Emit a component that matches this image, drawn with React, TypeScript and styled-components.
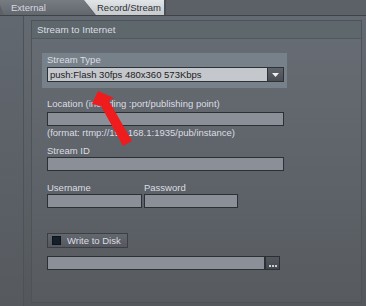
import React from "react";
import styled, { createGlobalStyle } from "styled-components";

const Global = createGlobalStyle`
  html, body { margin: 0; padding: 0; }
  body { background: #5d6268; font-family: "Liberation Sans", Arial, sans-serif; font-size: 9.5px; }
`;

const Root = styled.div`
  position: relative;
  width: 366px;
  height: 306px;
  overflow: hidden;
  display: flex;
  flex-direction: column;
  background: linear-gradient(#656b72, #54585d);
`;

const TabBar = styled.div`
  height: 15px;
  flex: none;
  display: flex;
  background: #5c6168;
  border-bottom: 1px solid #3f4348;
`;

const Tab = styled.div<{ $active?: boolean }>`
  height: 15px;
  display: flex;
  align-items: center;
  box-sizing: border-box;
  white-space: nowrap;
  color: ${(p) => (p.$active ? "#2c2f33" : "#d9d6e0")};
  background: ${(p) =>
    p.$active ? "linear-gradient(#e2e5e8, #c6cacd)" : "linear-gradient(#777c83, #62676d)"};
  clip-path: ${(p) =>
    p.$active
      ? "polygon(0 0, 100% 0, 100% 100%, 12px 100%)"
      : "polygon(0 0, calc(100% - 10px) 0, 100% 100%, 6px 100%)"};
  width: ${(p) => (p.$active ? "82px" : "96px")};
  margin-left: ${(p) => (p.$active ? "-10px" : "-2px")};
  padding-left: ${(p) => (p.$active ? "13px" : "13px")};
  border-right: ${(p) => (p.$active ? "2px solid #4b5056" : "none")};
`;

const Body = styled.div`
  flex: 1;
  display: flex;
`;

const LeftStrip = styled.div`
  width: 23px;
  flex: none;
  border-right: 1px solid #4d5257;
  background: linear-gradient(#626870, #565a5f);
`;

const Panel = styled.div`
  flex: 1;
  margin: 4px 4px 3px 7px;
  border: 1px solid #4e5358;
  display: flex;
  flex-direction: column;
  background: linear-gradient(#676d74, #575b60);
`;

const PanelHeader = styled.div`
  height: 17px;
  display: flex;
  align-items: center;
  padding-left: 5px;
  font-size: 9.8px;
  color: #dadce2;
  background: #5e676b;
  border-bottom: 1px solid #53595d;
`;

const Content = styled.div`
  display: flex;
  flex-direction: column;
  padding-left: 10px;
`;

const Group = styled.div`
  margin-top: 14px;
  width: 245px;
  height: 35px;
  box-sizing: border-box;
  background: #77818a;
  padding-left: 5px;
  display: flex;
  flex-direction: column;
`;

const Label = styled.div<{ $top?: number }>`
  height: 13px;
  line-height: 13px;
  color: #dcdce3;
  margin-top: ${(p) => p.$top ?? 0}px;
  white-space: nowrap;
`;

const Fields = styled.div`
  display: flex;
  flex-direction: column;
  padding-left: 5px;
`;

const Select = styled.div`
  margin-top: 1px;
  width: 237px;
  height: 15px;
  box-sizing: border-box;
  display: flex;
  border: 1px solid #2e3135;
  background: #c4c8cc;
  color: #1e2022;
`;

const SelectText = styled.div`
  flex: 1;
  padding-left: 2px;
  line-height: 13px;
  white-space: nowrap;
`;

const DropButton = styled.div`
  width: 15px;
  background: linear-gradient(#5f636a, #4a4e54);
  border-left: 1px solid #2e3135;
  display: flex;
  align-items: center;
  justify-content: center;
`;

const Input = styled.div<{ $width: number; $top?: number }>`
  width: ${(p) => p.$width}px;
  height: 14px;
  box-sizing: border-box;
  margin-top: ${(p) => p.$top ?? 0}px;
  border: 1px solid #2c2f33;
  background: #8b8f98;
`;

const Row = styled.div<{ $top?: number; $gap?: number }>`
  display: flex;
  gap: ${(p) => p.$gap ?? 0}px;
  margin-top: ${(p) => p.$top ?? 0}px;
`;

const Column = styled.div<{ $width: number }>`
  width: ${(p) => p.$width}px;
  display: flex;
  flex-direction: column;
`;

const DiskButton = styled.div`
  margin-top: 25px;
  width: 81px;
  height: 15px;
  box-sizing: border-box;
  border: 1px solid #3b3f44;
  background: linear-gradient(#63676e, #55595f);
  display: flex;
  align-items: center;
  gap: 6px;
  padding-left: 4px;
  white-space: nowrap;
  color: #dcdce3;
`;

const Check = styled.div`
  width: 7px;
  height: 7px;
  flex: none;
  background: #15202b;
  border: 1px solid #0d141b;
`;

const BrowseButton = styled.div`
  width: 15px;
  height: 14px;
  box-sizing: border-box;
  border: 1px solid #2c2f33;
  background: linear-gradient(#53575e, #44484e);
  display: flex;
  align-items: flex-end;
  justify-content: center;
  padding-bottom: 2px;
  gap: 1px;
`;

const Dot = styled.span`
  width: 2px;
  height: 2px;
  background: #c9ccd0;
`;

const Arrow = styled.svg`
  position: absolute;
  left: 80px;
  top: 80px;
`;

export default function App() {
  return (
    <>
      <Global />
      <Root>
        <TabBar>
          <Tab>External</Tab>
          <Tab $active>Record/Stream</Tab>
        </TabBar>
        <Body>
          <LeftStrip />
          <Panel>
            <PanelHeader>Stream to Internet</PanelHeader>
            <Content>
              <Group>
                <Label>Stream Type</Label>
                <Select>
                  <SelectText>push:Flash 30fps 480x360 573Kbps</SelectText>
                  <DropButton>
                    <svg width="7" height="4" viewBox="0 0 7 4">
                      <path d="M0 0 H7 L3.5 4 Z" fill="#eceef0" />
                    </svg>
                  </DropButton>
                </Select>
              </Group>
              <Fields>
                <Label $top={9}>Location (including :port/publishing point)</Label>
                <Input $width={237} $top={2} />
                <Label>(format: rtmp://192.168.1:1935/pub/instance)</Label>
                <Label $top={5}>Stream ID</Label>
                <Input $width={237} />
                <Row $top={10} $gap={2}>
                  <Column $width={95}>
                    <Label>Username</Label>
                    <Input $width={95} />
                  </Column>
                  <Column $width={94}>
                    <Label>Password</Label>
                    <Input $width={94} />
                  </Column>
                </Row>
                <DiskButton>
                  <Check />
                  Write to Disk
                </DiskButton>
                <Row $top={8}>
                  <Input $width={218} />
                  <BrowseButton>
                    <Dot />
                    <Dot />
                    <Dot />
                  </BrowseButton>
                </Row>
              </Fields>
            </Content>
          </Panel>
        </Body>
        <Arrow width="60" height="70" viewBox="0 0 60 70">
          <path
            d="M18 11 L34 18 L29 21 L52 61 L43 66 L21 26 L12 24 Z"
            fill="#ee1c1c"
          />
        </Arrow>
      </Root>
    </>
  );
}
